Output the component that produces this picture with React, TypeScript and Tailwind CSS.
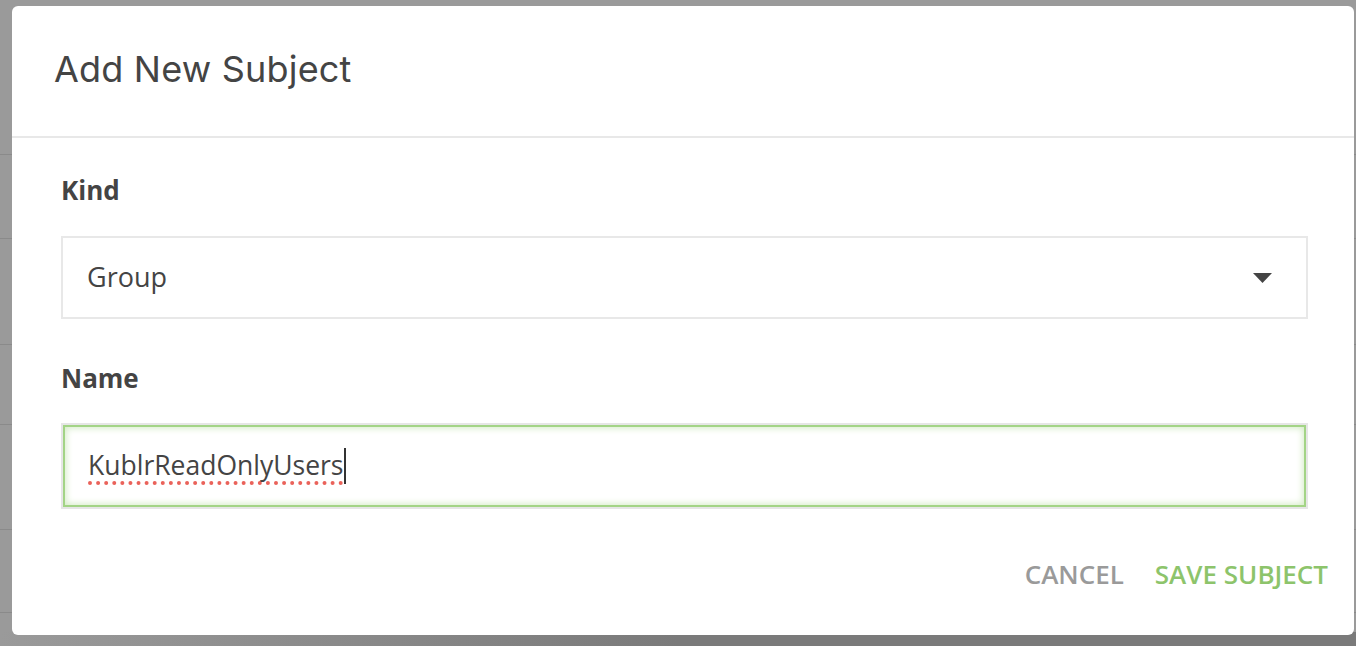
import * as React from "react";

const rows = [154, 238, 344, 424, 529, 612];

const App = () => {
  const [kind] = React.useState<string>("Group");
  const [name, setName] = React.useState<string>("KublrReadOnlyUsers");

  return (
    <div className="relative w-full h-[646px] overflow-hidden bg-[#9a9a9a] font-['Open_Sans',sans-serif]">
      {/* page behind the overlay */}
      <div className="flex flex-col">
        {rows.map((y, i) => (
          <div
            key={i}
            className="h-px bg-[#8a8a8a]"
            style={{ marginTop: i === 0 ? y : y - rows[i - 1] - 1 }}
          />
        ))}
      </div>
      <div className="absolute left-0 right-0 bottom-0 h-[14px] bg-gradient-to-r from-[#9a9a9a] via-[#7a7a7a] to-[#7a7a7a]" />

      {/* modal */}
      <div className="absolute left-[12px] top-[6px] w-[1342px] h-[629px] bg-white rounded-[6px] flex flex-col">
        <div className="h-[132px] flex items-center pl-[42px] border-b-2 border-[#e8e8e8]">
          <h1 className="text-[36px] text-[#444] font-['Inter',sans-serif] tracking-[0.2px] -mt-[4px]">
            Add New Subject
          </h1>
        </div>

        <div className="flex flex-col pl-[49px] pr-[46px] pt-[36px]">
          <label className="text-[26px] font-bold text-[#444] leading-[32px]">Kind</label>
          <div className="mt-[30px] h-[83px] border-2 border-[#e8e8e8] flex items-center justify-between pl-[24px] pr-[34px]">
            <span className="text-[27px] text-[#444]">{kind}</span>
            <svg width="19" height="10" viewBox="0 0 19 10">
              <path d="M0 0 H19 L9.5 10 Z" fill="#444" />
            </svg>
          </div>

          <label className="mt-[43px] text-[26px] font-bold text-[#444] leading-[32px]">Name</label>
          <div className="mt-[29px] h-[86px] border-2 border-[#e6e6e6]">
            <div className="h-full shadow-[inset_0_0_0_2px_#a3d486,inset_0_0_7px_3px_#d3ebc4] flex items-center pl-[25px]">
              <span className="relative text-[26.5px] text-[#444] underline decoration-dotted decoration-[#ea625a] decoration-[4px] underline-offset-[6px] [text-decoration-skip-ink:none]">
                {name}
                <span className="absolute -right-[2px] top-[2px] w-[2px] h-[36px] bg-[#333]" />
              </span>
              <input
                className="hidden"
                value={name}
                onChange={(e) => setName(e.target.value)}
              />
            </div>
          </div>
        </div>

        <div className="flex justify-end items-center gap-[31px] pr-[26px] mt-[46px]">
          <button className="text-[26px] font-semibold text-[#9a9a9a]">CANCEL</button>
          <button className="text-[26px] font-semibold text-[#8dc46b]">SAVE SUBJECT</button>
        </div>
      </div>
    </div>
  );
};

export default App;
